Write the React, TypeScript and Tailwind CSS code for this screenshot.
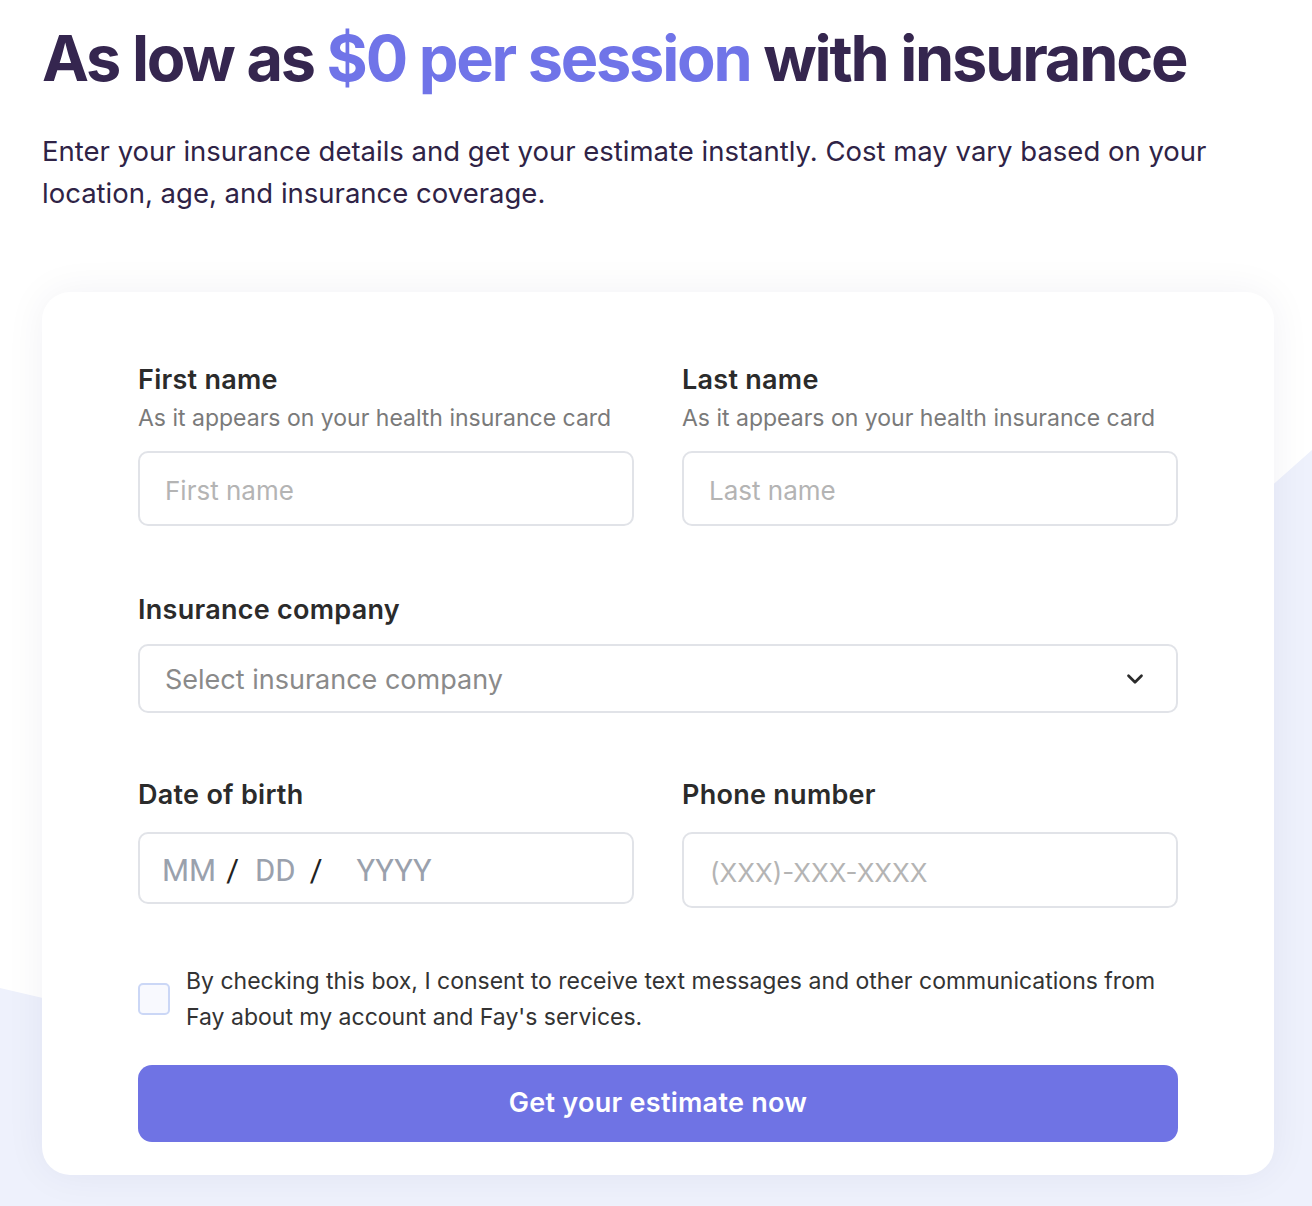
import { ChevronDown } from "lucide-react";

const font = { fontFamily: "Inter, 'Noto Sans', sans-serif" };

function FieldLabel({ title, hint }: { title: string; hint?: string }) {
  return (
    <div className="flex flex-col">
      <label className="text-[27px] leading-[32px] font-semibold text-[#2b2b2b] tracking-[0.01em]">{title}</label>
      {hint && <p className="mt-[7px] text-[23px] leading-[30px] text-[#7a7a7a]">{hint}</p>}
    </div>
  );
}

export default function App() {
  return (
    <div className="relative min-h-[1206px] w-[1312px] overflow-hidden bg-white" style={font}>
      {/* background shape */}
      <svg className="absolute inset-0 h-full w-full" viewBox="0 0 1312 1206" preserveAspectRatio="none">
        <polygon points="0,988 60,1002 1250,505 1312,450 1312,1206 0,1206" fill="#eef1fc" />
      </svg>

      <div className="relative px-[42px] pt-[24px]">
        <h1 className="text-[63px] leading-[68px] font-bold tracking-[-0.035em] text-[#35264f]">
          As low as <span className="text-[#7074e8]">$0 per session</span> with insurance
        </h1>
        <p className="mt-[38px] text-[27.5px] leading-[42px] text-[#2f2346]">
          Enter your insurance details and get your estimate instantly. Cost may vary based on your location, age, and
          insurance coverage.
        </p>

        <form className="mt-[78px] w-[1232px] rounded-[28px] bg-white px-[96px] pt-[72px] pb-[33px] shadow-[0_0_40px_rgba(40,40,80,0.06)]">
          <div className="grid grid-cols-2 gap-x-[48px]">
            <div className="flex flex-col">
              <FieldLabel title="First name" hint="As it appears on your health insurance card" />
              <input
                placeholder="First name"
                className="mt-[18px] h-[75px] rounded-[10px] border-2 border-[#e1e3e8] px-[25px] pt-[4px] text-[26px] text-[#2b2b2b] outline-none placeholder:text-[#b4b4b4]"
              />
            </div>
            <div className="flex flex-col">
              <FieldLabel title="Last name" hint="As it appears on your health insurance card" />
              <input
                placeholder="Last name"
                className="mt-[18px] h-[75px] rounded-[10px] border-2 border-[#e1e3e8] px-[25px] pt-[4px] text-[26px] text-[#2b2b2b] outline-none placeholder:text-[#b4b4b4]"
              />
            </div>
          </div>

          <div className="mt-[68px] flex flex-col">
            <FieldLabel title="Insurance company" />
            <button
              type="button"
              className="mt-[18px] flex h-[69px] items-center justify-between rounded-[10px] border-2 border-[#e1e3e8] pl-[25px] pr-[28px] text-[27px] text-[#8a8a8a]"
            >
              <span className="pt-[4px]">Select insurance company</span>
              <ChevronDown className="h-[26px] w-[26px] text-[#2b2b2b]" strokeWidth={2.5} />
            </button>
          </div>

          <div className="mt-[66px] grid grid-cols-2 gap-x-[48px]">
            <div className="flex flex-col">
              <FieldLabel title="Date of birth" />
              <div
                className="mt-[21px] flex h-[72px] items-center rounded-[10px] border-2 border-[#e1e3e8] pl-[22px] pt-[6px] text-[31px] text-[#9aa1ad]"
                style={{ fontFamily: "Roboto, sans-serif" }}
              >
                <span>MM</span>
                <span className="ml-[10px] mr-[16px] text-[#222]">/</span>
                <span>DD</span>
                <span className="ml-[14px] mr-[34px] text-[#222]">/</span>
                <span>YYYY</span>
              </div>
            </div>
            <div className="flex flex-col">
              <FieldLabel title="Phone number" />
              <input
                placeholder="(XXX)-XXX-XXXX"
                className="mt-[21px] h-[76px] rounded-[10px] border-2 border-[#e1e3e8] px-[26px] pt-[4px] text-[26px] text-[#2b2b2b] outline-none placeholder:text-[#b4b4b4]"
              />
            </div>
          </div>

          <label className="mt-[55px] flex items-center gap-[16px]">
            <span className="h-[32px] w-[32px] shrink-0 rounded-[5px] border-2 border-[#cbd7f6] bg-[#f8f9fe]" />
            <span className="text-[23px] leading-[36px] text-[#333]">
              By checking this box, I consent to receive text messages and other communications from Fay about my
              account and Fay's services.
            </span>
          </label>

          <button
            type="submit"
            className="mt-[30px] h-[77px] w-full rounded-[14px] bg-[#6f73e4] text-[27px] font-semibold tracking-[0.01em] text-white"
          >
            Get your estimate now
          </button>
        </form>
      </div>
    </div>
  );
}
